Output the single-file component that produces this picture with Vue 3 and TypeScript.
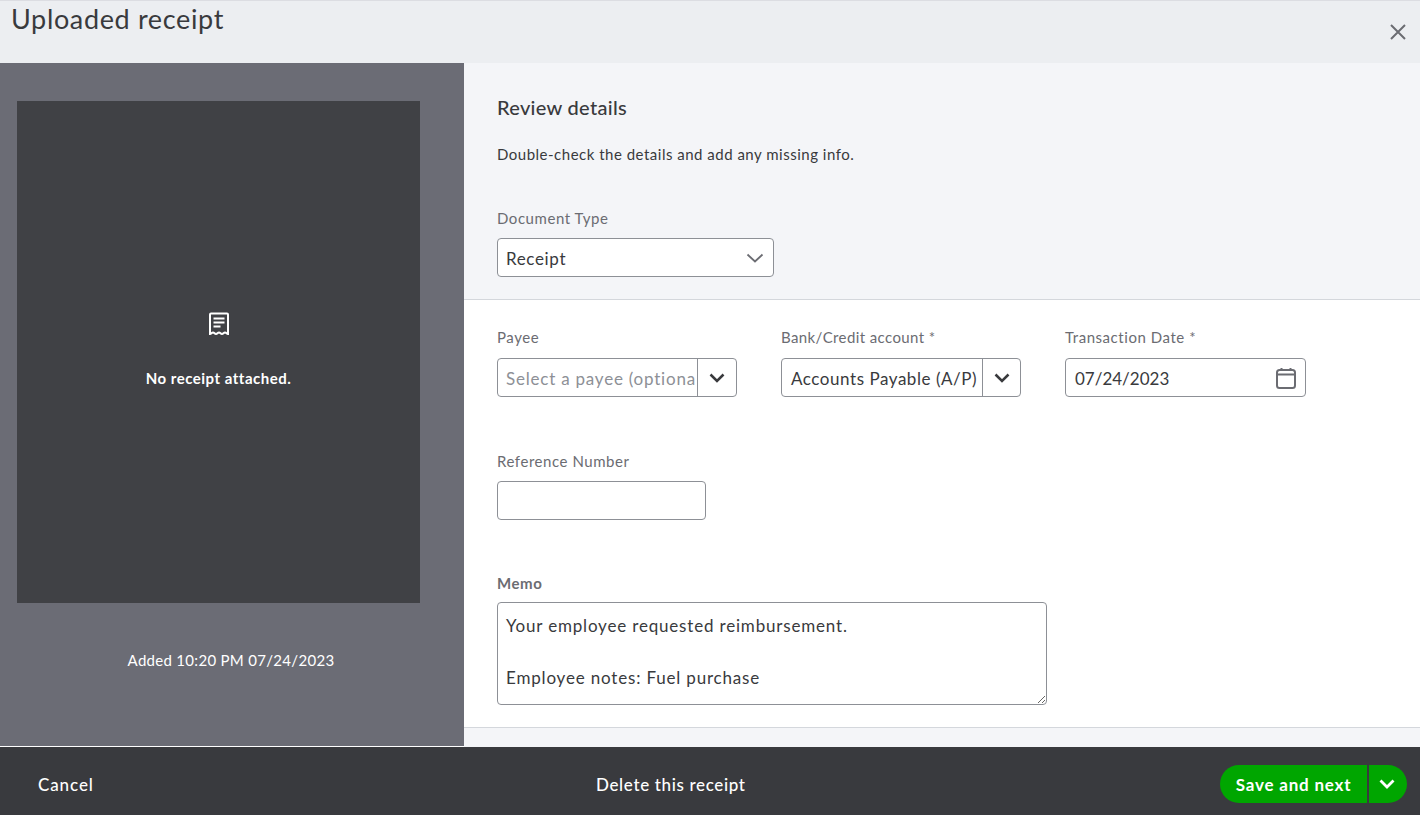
<script setup lang="ts">
const title = 'Uploaded receipt'
</script>

<template>
  <div class="page">
    <header class="head">
      <h1 class="title">{{ title }}</h1>
      <button class="close" aria-label="Close">
        <svg width="18" height="18" viewBox="0 0 18 18"><path d="M2 2l14 14M16 2L2 16" stroke="#6b6c72" stroke-width="2" fill="none"/></svg>
      </button>
    </header>
    <main class="body">
      <aside class="side">
        <div class="preview">
          <svg class="receipt" width="22" height="24" viewBox="0 0 22 24" fill="none">
            <path d="M2 2.500C2 1.900 2.400 1.500 3 1.500h16c.6 0 1 .4 1 1V22c-1.400 0-1.400-1.400-3-1.400s-1.500 1.400-3 1.400-1.500-1.400-3-1.400-1.500 1.400-3 1.400-1.500-1.400-3-1.400S3.400 22 2 22Z" stroke="#fff" stroke-width="2"/>
            <path d="M5.500 6.500h11M5.500 10.500h11M5.500 14.500h7" stroke="#fff" stroke-width="2"/>
          </svg>
          <p class="none">No receipt attached.</p>
        </div>
        <p class="added">Added 10:20 PM 07/24/2023</p>
      </aside>
      <section class="content">
        <div class="review">
          <h2 class="sub">Review details</h2>
          <p class="hint">Double-check the details and add any missing info.</p>
          <label class="label doc-label">Document Type</label>
          <div class="field doc">
            <span class="val">Receipt</span>
            <svg class="chev-thin" width="18" height="10" viewBox="0 0 18 10" fill="none"><path d="M1.500 1.500L9 8.500l7.500-7" stroke="#6b6c72" stroke-width="1.800"/></svg>
          </div>
        </div>
        <div class="form">
          <div class="row">
            <div class="col">
              <label class="label">Payee</label>
              <div class="field combo">
                <span class="val ph">Select a payee (optiona</span>
                <span class="drop"><svg width="16" height="10" viewBox="0 0 16 10" fill="none"><path d="M1.500 1.500L8 8l6.500-6.500" stroke="#393a3d" stroke-width="2.500"/></svg></span>
              </div>
            </div>
            <div class="col">
              <label class="label bank">Bank/Credit account *</label>
              <div class="field combo">
                <span class="val shifted acct">Accounts Payable (A/P)</span>
                <span class="drop narrow"><svg width="16" height="10" viewBox="0 0 16 10" fill="none"><path d="M1.500 1.500L8 8l6.500-6.500" stroke="#393a3d" stroke-width="2.500"/></svg></span>
              </div>
            </div>
            <div class="col">
              <label class="label">Transaction Date *</label>
              <div class="field date">
                <span class="val shifted nums">07/24/2023</span>
                <svg width="20" height="22" viewBox="0 0 20 22" fill="none"><rect x="1" y="3" width="18" height="18" rx="2.500" stroke="#6b6c72" stroke-width="2"/><path d="M1 7.500h18M5.500 1v3M14.500 1v3" stroke="#6b6c72" stroke-width="2"/></svg>
              </div>
            </div>
          </div>
          <label class="label ref-label">Reference Number</label>
          <div class="field ref"></div>
          <label class="label memo-label">Memo</label>
          <textarea class="memo" readonly>Your employee requested reimbursement.

Employee notes: Fuel purchase</textarea>
        </div>
        <div class="tail"></div>
      </section>
    </main>
    <footer class="foot">
      <span class="link cancel">Cancel</span>
      <span class="link del">Delete this receipt</span>
      <div class="save">
        <span class="save-main">Save and next</span>
        <span class="save-arrow"><svg width="16" height="10" viewBox="0 0 16 10" fill="none"><path d="M1.500 1.500L8 8l6.500-6.500" stroke="#fff" stroke-width="2.800"/></svg></span>
      </div>
    </footer>
  </div>
</template>

<style>
html, body { margin: 0; overflow: hidden; }
</style>

<style scoped>
.page { width: 1420px; height: 815px; display: flex; flex-direction: column; font-family: Lato, "Open Sans", sans-serif; color: #393a3d; font-size: 16px; }
.head { height: 63px; box-sizing: border-box; flex: none; background: #eceef1; border-top: 1px solid #dcdde2; display: flex; justify-content: space-between; padding: 0 13px 0 11px; }
.title { margin: 2px 0 0; font-size: 27px; font-weight: 400; line-height: 32px; letter-spacing: .65px; }
.close { border: 0; background: none; padding: 0; width: 18px; height: 18px; margin-top: 22px; }
.close svg { display: block; }
.body { flex: none; height: 684px; display: flex; }
.side { width: 464px; flex: none; background: #6b6c75; box-sizing: border-box; padding: 38px 0 0 17px; height: 683px; }
.preview { width: 403px; height: 502px; background: #404145; display: flex; flex-direction: column; align-items: center; padding-top: 211px; box-sizing: border-box; }
.receipt { display: block; }
.none { margin: 32px 0 0; color: #fff; font-size: 15px; font-weight: 700; line-height: 20px; letter-spacing: .5px; }
.added { margin: 47px 0 0; width: 428px; text-align: center; color: #fff; font-size: 15px; line-height: 20px; letter-spacing: .3px; }
.content { flex: 1; display: flex; flex-direction: column; }
.review { height: 237px; box-sizing: border-box; flex: none; background: #f4f5f8; border-bottom: 1px solid #d4d7dc; padding: 31px 0 0 33px; }
.sub { margin: 0; font-size: 20px; font-weight: 500; line-height: 26px; letter-spacing: .3px; color: #393a3d; }
.hint { margin: 24px 0 0; font-size: 15px; line-height: 20px; letter-spacing: .5px; }
.label { display: block; font-size: 15px; line-height: 20px; color: #6b6c72; letter-spacing: .55px; }
.bank { letter-spacing: .4px; }
.doc-label { margin-top: 44px; }
.field { box-sizing: border-box; height: 39px; border: 1px solid #8d9096; border-radius: 4px; background: #fff; display: flex; align-items: center; font-size: 17px; }
.val { padding: 2px 0 0 8px; white-space: nowrap; overflow: hidden; flex: 1; letter-spacing: .65px; }
.shifted { padding-left: 9px; }
.acct { letter-spacing: .55px; }
.nums { letter-spacing: 0; }
.ph { color: #8d9096; letter-spacing: .78px; }
.doc { width: 277px; margin-top: 10px; padding-right: 9px; }
.form { flex: none; height: 428px; box-sizing: border-box; background: #fff; border-bottom: 1px solid #d4d7dc; padding: 27px 0 0 33px; }
.row { display: flex; gap: 44px; }
.col { width: 240px; }
.col .label { margin-bottom: 11px; }
.combo { padding: 0; }
.drop { flex: none; width: 39px; height: 100%; border-left: 1px solid #8d9096; display: flex; align-items: center; justify-content: center; box-sizing: border-box; }
.narrow { width: 38px; }
.date { padding-right: 9px; width: 241px; }
.ref-label { margin-top: 54px; }
.ref { width: 209px; margin-top: 10px; }
.memo-label { margin-top: 53px; font-weight: 700; }
.memo { display: block; box-sizing: border-box; width: 550px; height: 103px; margin-top: 9px; padding: 10px 8px 0; border: 1px solid #8d9096; border-radius: 4px; font: 17px/26px Lato, "Open Sans", sans-serif; letter-spacing: .82px; color: #393a3d; outline: none; overflow: hidden; }
.tail { flex: 1; background: #f4f5f8; }
.foot { flex: 1; background: #393a3e; display: grid; grid-template-columns: 558px 1fr auto; align-items: center; padding: 6px 13px 0 38px; box-sizing: border-box; }
.link { color: #fff; font-size: 17px; font-weight: 500; letter-spacing: .7px; }
.cancel { letter-spacing: .9px; }
.del { letter-spacing: .65px; }
.save { display: flex; height: 38px; gap: 2px; color: #fff; font-size: 17px; font-weight: 700; letter-spacing: .8px; }
.save-main { background: #00a600; border-radius: 19px 0 0 19px; width: 147px; display: flex; align-items: center; justify-content: center; }
.save-arrow { background: #00a600; border-radius: 0 19px 19px 0; width: 38px; display: flex; align-items: center; justify-content: center; padding-right: 3px; box-sizing: border-box; }
</style>
